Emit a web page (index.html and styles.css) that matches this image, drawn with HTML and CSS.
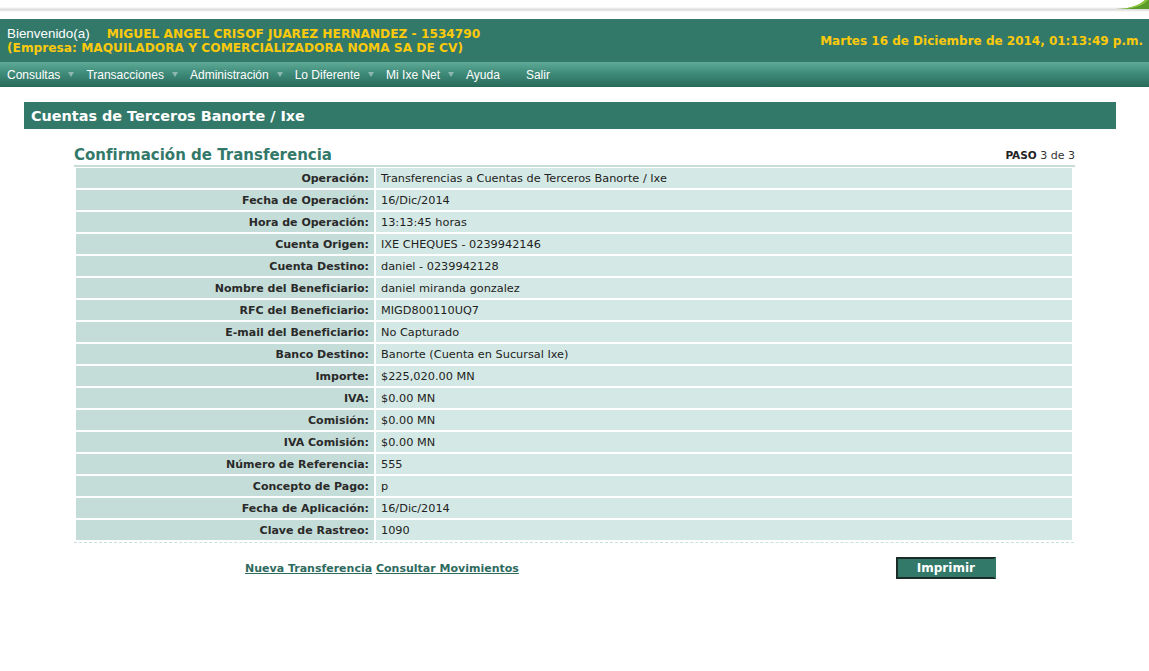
FILE: index.html
```html
<!DOCTYPE html>
<html lang="es">
<head>
<meta charset="utf-8">
<title>Confirmación de Transferencia</title>
<link rel="stylesheet" href="styles.css">
</head>
<body>
<div class="topstrip">
  <div class="shadow"></div>
  <svg class="swoosh" width="34" height="10" viewBox="0 0 34 10"><path d="M0 9 C14 9 24 6 30 0 L34 0 L34 9 Z" fill="#5a9b2a"/><path d="M4 9 C16 8 25 5 30 0 L33 0 C28 6 18 9 4 9 Z" fill="#8cc63f"/></svg>
</div>
<header class="header">
  <div class="welcome">
    <div class="line"><span class="hello">Bienvenido(a)</span><span class="yellow name">MIGUEL ANGEL CRISOF JUAREZ HERNANDEZ - 1534790</span></div>
    <div class="line"><span class="yellow">(Empresa: MAQUILADORA Y COMERCIALIZADORA NOMA SA DE CV)</span></div>
  </div>
  <div class="yellow date">Martes 16 de Diciembre de 2014, 01:13:49 p.m.</div>
</header>
<nav class="menu">
  <span class="item">Consultas<svg class="arrow" width="6" height="5" viewBox="0 0 6 5"><path d="M0 0H6L3 5Z"/></svg></span>
  <span class="item">Transacciones<svg class="arrow" width="6" height="5" viewBox="0 0 6 5"><path d="M0 0H6L3 5Z"/></svg></span>
  <span class="item">Administración<svg class="arrow" width="6" height="5" viewBox="0 0 6 5"><path d="M0 0H6L3 5Z"/></svg></span>
  <span class="item">Lo Diferente<svg class="arrow" width="6" height="5" viewBox="0 0 6 5"><path d="M0 0H6L3 5Z"/></svg></span>
  <span class="item">Mi Ixe Net<svg class="arrow" width="6" height="5" viewBox="0 0 6 5"><path d="M0 0H6L3 5Z"/></svg></span>
  <span class="item plain">Ayuda</span>
  <span class="item plain">Salir</span>
</nav>
<div class="section">Cuentas de Terceros Banorte / Ixe</div>
<main class="content">
  <div class="titlerow">
    <h1>Confirmación de Transferencia</h1>
    <div class="paso"><b>PASO</b> 3 de 3</div>
  </div>
  <table class="data">
    <tr><th>Operación:</th><td>Transferencias a Cuentas de Terceros Banorte / Ixe</td></tr>
    <tr><th>Fecha de Operación:</th><td>16/Dic/2014</td></tr>
    <tr><th>Hora de Operación:</th><td>13:13:45 horas</td></tr>
    <tr><th>Cuenta Origen:</th><td>IXE CHEQUES - 0239942146</td></tr>
    <tr><th>Cuenta Destino:</th><td>daniel - 0239942128</td></tr>
    <tr><th>Nombre del Beneficiario:</th><td>daniel miranda gonzalez</td></tr>
    <tr><th>RFC del Beneficiario:</th><td>MIGD800110UQ7</td></tr>
    <tr><th>E-mail del Beneficiario:</th><td>No Capturado</td></tr>
    <tr><th>Banco Destino:</th><td>Banorte (Cuenta en Sucursal Ixe)</td></tr>
    <tr><th>Importe:</th><td>$225,020.00 MN</td></tr>
    <tr><th>IVA:</th><td>$0.00 MN</td></tr>
    <tr><th>Comisión:</th><td>$0.00 MN</td></tr>
    <tr><th>IVA Comisión:</th><td>$0.00 MN</td></tr>
    <tr><th>Número de Referencia:</th><td>555</td></tr>
    <tr><th>Concepto de Pago:</th><td>p</td></tr>
    <tr><th>Fecha de Aplicación:</th><td>16/Dic/2014</td></tr>
    <tr><th>Clave de Rastreo:</th><td>1090</td></tr>
  </table>
  <div class="actions">
    <div class="links"><a href="#">Nueva Transferencia</a> <a href="#">Consultar Movimientos</a></div>
    <button class="print" type="button">Imprimir</button>
  </div>
</main>
</body>
</html>
```
FILE: styles.css
```css
html, body { margin: 0; padding: 0; background: #fff; }
body { font-family: "DejaVu Sans", Verdana, sans-serif; color: #222; }

.topstrip { height: 19px; position: relative; overflow: hidden; }
.shadow { position: absolute; left: 0; right: 0; top: 7px; height: 5px;
  background: linear-gradient(#ffffff, #dcdcdc 50%, #efefef 80%, #ffffff); }
.swoosh { position: absolute; right: 0; top: 0; }

.header { background: #33796a; height: 43px; display: flex; justify-content: space-between; align-items: center; padding: 0 6px 0 7px; box-sizing: border-box; }
.welcome { padding-bottom: 2px; }
.line { height: 14px; line-height: 14px; white-space: nowrap; }
.hello { font-family: "Liberation Sans", Arial, sans-serif; color: #fff; font-size: 13.4px; }
.yellow { color: #fcca0b; font-weight: bold; font-size: 12.2px; }
.name { margin-left: 17px; }
.date { padding-top: 1px; font-size: 12px; }

.menu { height: 25px; background: linear-gradient(#5eaa97, #3f8b79 45%, #28695a); display: flex; align-items: center; padding-left: 7px; box-sizing: border-box; font-family: "Liberation Sans", Arial, sans-serif; font-size: 12px; color: #fff; }
.item { display: inline-flex; align-items: center; margin-right: 12px; white-space: nowrap; }
.item.plain { margin-right: 26px; }
.arrow { margin-left: 8px; fill: #8cb8ad; }

.section { margin: 15px 33px 0 24px; height: 27px; background: #33796a; color: #fff; font-weight: bold; font-size: 14.4px; line-height: 28px; padding-left: 7px; }

.content { width: 1001px; margin: 0 auto; }
.titlerow { display: flex; justify-content: space-between; align-items: flex-end; margin-top: 17px; border-bottom: 2px solid #c6ddd8; padding-bottom: 1px; }
h1 { margin: 0; font-size: 15px; color: #33796a; font-weight: bold; line-height: 18px; }
.paso { font-size: 11px; color: #333; line-height: 14px; padding-bottom: 1px; }
.paso b { font-size: 10.5px; color: #222; }

.data { width: 1000px; border-collapse: separate; border-spacing: 2px; font-size: 11.3px; margin-top: -1px; border-bottom: 1px dashed #c6e2da; }
.data th { width: 293px; background: #c5ddd8; text-align: right; font-weight: bold; font-size: 11px; color: #2a2a2a; height: 20px; padding: 0 5px 0 0; }
.data td { background: #d4e9e5; color: #222; height: 20px; padding: 0 0 0 5px; }

.actions { display: flex; align-items: center; margin-top: 14px; }
.links { margin-left: 171px; font-size: 11px; font-weight: bold; }
.links a { color: #2e6b5e; text-decoration: underline; }
.print { margin-left: 377px; width: 100px; height: 22px; background: #33796a; color: #fff; font-family: "DejaVu Sans", Verdana, sans-serif; font-weight: bold; font-size: 12px; border: 2px solid #1b2b26; border-right-color: #33796a; border-bottom-color: #1b2b26; padding: 0; }
```
